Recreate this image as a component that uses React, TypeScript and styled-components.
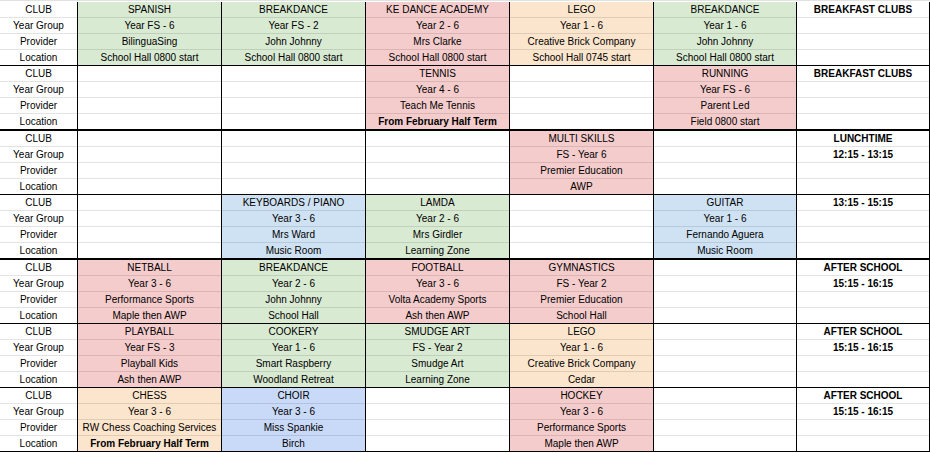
import React from 'react';
import styled, { createGlobalStyle } from 'styled-components';

type Tone = 'green' | 'red' | 'orange' | 'blue' | 'cornflower';

type Club = {
  name: string;
  year: string;
  provider: string;
  location: string;
  tone: Tone;
  boldLocation?: boolean;
};

type Session = {
  clubs: (Club | null)[];
  notes: string[];
  thick?: boolean;
};

const tones: Record<Tone, string> = {
  green: '#d9ead3',
  red: '#f4cccc',
  orange: '#fce5cd',
  blue: '#cfe2f3',
  cornflower: '#c9daf8',
};

const labels = ['CLUB', 'Year Group', 'Provider', 'Location'];

const club = (
  name: string,
  year: string,
  provider: string,
  location: string,
  tone: Tone,
  boldLocation = false,
): Club => ({ name, year, provider, location, tone, boldLocation });

const sessions: Session[] = [
  {
    clubs: [
      club('SPANISH', 'Year FS - 6', 'BilinguaSing', 'School Hall 0800 start', 'green'),
      club('BREAKDANCE', 'Year FS - 2', 'John Johnny', 'School Hall 0800 start', 'green'),
      club('KE DANCE ACADEMY', 'Year 2 - 6', 'Mrs Clarke', 'School Hall 0800 start', 'red'),
      club('LEGO', 'Year 1 - 6', 'Creative Brick Company', 'School Hall 0745 start', 'orange'),
      club('BREAKDANCE', 'Year 1 - 6', 'John Johnny', 'School Hall 0800 start', 'green'),
    ],
    notes: ['BREAKFAST CLUBS'],
  },
  {
    clubs: [
      null,
      null,
      club('TENNIS', 'Year 4 - 6', 'Teach Me Tennis', 'From February Half Term', 'red', true),
      null,
      club('RUNNING', 'Year FS - 6', 'Parent Led', 'Field 0800 start', 'red'),
    ],
    notes: ['BREAKFAST CLUBS'],
    thick: true,
  },
  {
    clubs: [
      null,
      null,
      null,
      club('MULTI SKILLS', 'FS - Year 6', 'Premier Education', 'AWP', 'red'),
      null,
    ],
    notes: ['LUNCHTIME', '12:15 - 13:15'],
  },
  {
    clubs: [
      null,
      club('KEYBOARDS / PIANO', 'Year 3 - 6', 'Mrs Ward', 'Music Room', 'blue'),
      club('LAMDA', 'Year 2 - 6', 'Mrs Girdler', 'Learning Zone', 'green'),
      null,
      club('GUITAR', 'Year 1 - 6', 'Fernando Aguera', 'Music Room', 'blue'),
    ],
    notes: ['13:15 - 15:15'],
    thick: true,
  },
  {
    clubs: [
      club('NETBALL', 'Year 3 - 6', 'Performance Sports', 'Maple then AWP', 'red'),
      club('BREAKDANCE', 'Year 2 - 6', 'John Johnny', 'School Hall', 'green'),
      club('FOOTBALL', 'Year 3 - 6', 'Volta Academy Sports', 'Ash then AWP', 'red'),
      club('GYMNASTICS', 'FS - Year 2', 'Premier Education', 'School Hall', 'red'),
      null,
    ],
    notes: ['AFTER SCHOOL', '15:15 - 16:15'],
  },
  {
    clubs: [
      club('PLAYBALL', 'Year FS - 3', 'Playball Kids', 'Ash then AWP', 'red'),
      club('COOKERY', 'Year 1 - 6', 'Smart Raspberry', 'Woodland Retreat', 'green'),
      club('SMUDGE ART', 'FS - Year 2', 'Smudge Art', 'Learning Zone', 'green'),
      club('LEGO', 'Year 1 - 6', 'Creative Brick Company', 'Cedar', 'orange'),
      null,
    ],
    notes: ['AFTER SCHOOL', '15:15 - 16:15'],
  },
  {
    clubs: [
      club('CHESS', 'Year 3 - 6', 'RW Chess Coaching Services', 'From February Half Term', 'orange', true),
      club('CHOIR', 'Year 3 - 6', 'Miss Spankie', 'Birch', 'cornflower'),
      null,
      club('HOCKEY', 'Year 3 - 6', 'Performance Sports', 'Maple then AWP', 'red'),
      null,
    ],
    notes: ['AFTER SCHOOL', '15:15 - 16:15'],
  },
];

const GlobalStyle = createGlobalStyle`
  * { box-sizing: border-box; }
  body {
    margin: 0;
    background: #fff;
    font-family: "Liberation Sans", Arial, sans-serif;
    font-size: 10px;
    color: #000;
  }
`;

const ClubColumn = ({ data }: { data: Club | null }) => (
  <Column $bg={data ? tones[data.tone] : '#fff'}>
    <Cell>{data?.name}</Cell>
    <Cell>{data?.year}</Cell>
    <Cell>{data?.provider}</Cell>
    <Cell $bold={data?.boldLocation}>{data?.location}</Cell>
  </Column>
);

const App = () => {
  return (
    <>
      <GlobalStyle />
      <Sheet>
        {sessions.map((session, i) => (
          <Block key={i} $thick={session.thick}>
            <Column $bg="#fff">
              {labels.map((label) => (
                <Cell key={label}>{label}</Cell>
              ))}
            </Column>
            {session.clubs.map((c, j) => (
              <ClubColumn key={j} data={c} />
            ))}
            <Column $bg="#fff">
              {[0, 1, 2, 3].map((k) => (
                <Cell key={k} $bold>
                  {session.notes[k]}
                </Cell>
              ))}
            </Column>
          </Block>
        ))}
      </Sheet>
    </>
  );
};

export default App;

const Sheet = styled.div`
  width: 930px;
  display: flex;
  flex-direction: column;
  padding-top: 1px;
  border-top: 1px solid #e2e2e2;
`;

const Block = styled.div<{ $thick?: boolean }>`
  display: grid;
  grid-template-columns: 78px repeat(4, 144px) 143px 133px;
  height: ${(p) => (p.$thick ? 65 : 64)}px;
  border-bottom: ${(p) => (p.$thick ? 3 : 1)}px solid #000;
`;

const Column = styled.div<{ $bg: string }>`
  display: grid;
  grid-template-rows: 16px 16px 16px 1fr;
  background-color: ${(p) => p.$bg};
  border-right: 1px solid #000;
  min-width: 0;
`;

const Cell = styled.div<{ $bold?: boolean }>`
  line-height: 15px;
  text-align: center;
  white-space: nowrap;
  overflow: hidden;
  font-weight: ${(p) => (p.$bold ? 700 : 400)};
  border-bottom: 1px solid rgba(0, 0, 0, 0.11);

  &:last-child {
    border-bottom: none;
  }
`;
